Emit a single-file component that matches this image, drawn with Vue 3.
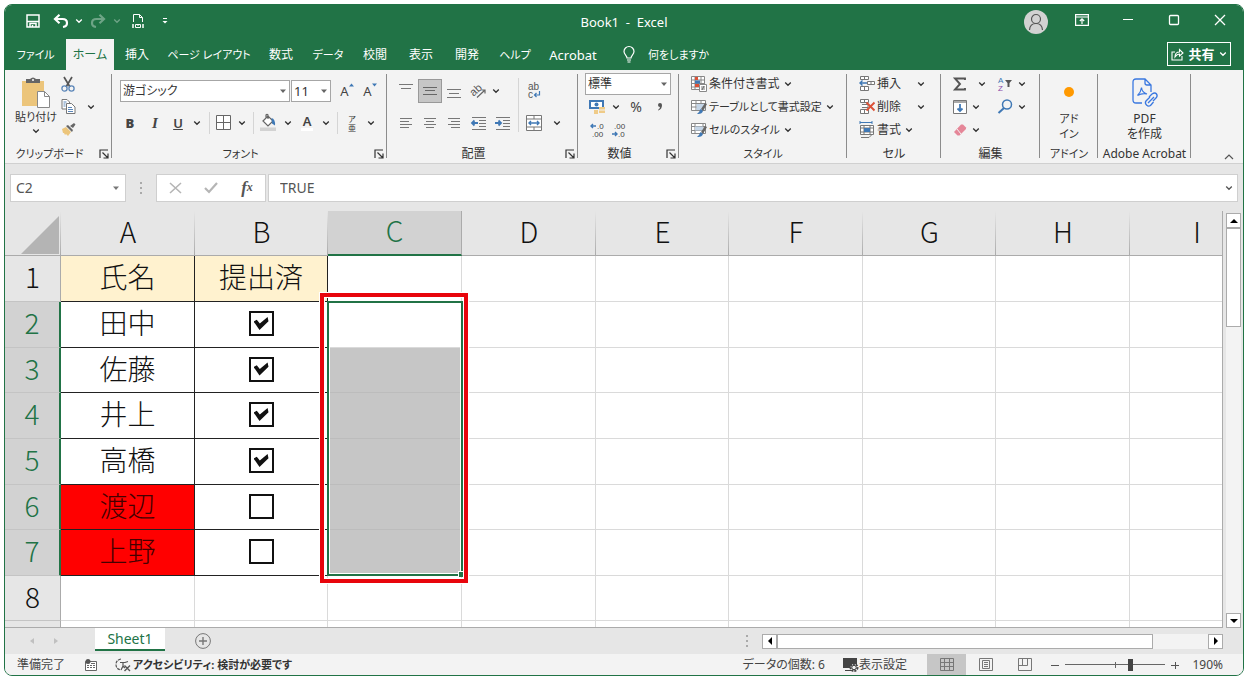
<script setup>
import { ref } from 'vue'

const tabs = ['ファイル', 'ホーム', '挿入', 'ページ レイアウト', '数式', 'データ', '校閲', '表示', '開発', 'ヘルプ', 'Acrobat']
const compact = ['ファイル', 'ページ レイアウト', 'データ', 'ヘルプ']
const activeTab = ref('ホーム')
const letters = ['A', 'B', 'C', 'D', 'E', 'F', 'G', 'H', 'I']
const people = ref([
  { row: 2, name: '田中', done: true },
  { row: 3, name: '佐藤', done: true },
  { row: 4, name: '井上', done: true },
  { row: 5, name: '高橋', done: true },
  { row: 6, name: '渡辺', done: false },
  { row: 7, name: '上野', done: false },
])
const zoom = ref(190)
const formula = ref('TRUE')
</script>

<template>
  <div class="desktop">
    <svg class="defs" aria-hidden="true">
      <symbol id="chev" viewBox="0 0 8 8"><path d="M1.2 2.500 4 5.300 6.800 2.500" fill="none" stroke="currentColor" stroke-width="1.3" /></symbol>
      <symbol id="launch" viewBox="0 0 10 10"><path d="M1 9V1h8M3.5 3.5l5 5M9 4.5V9H4.5" fill="none" stroke="currentColor" stroke-width="1.2" /></symbol>
      <symbol id="tri" viewBox="0 0 8 8"><path d="M1 2.5h6L4 6z" fill="currentColor" /></symbol>
    </svg>
    <main class="window">
      <header class="title-bar">
        <div class="quick">
          <button aria-label="上書き保存"><svg width="14" height="14" viewBox="0 0 14 14" fill="none" stroke="#fff" stroke-width="1.500"><path d="M1 1h12v12H1z" /><path d="M1 7.500h12M4 13v-3.500h6V13" /><path d="M6.500 11v2" /></svg></button>
          <button aria-label="元に戻す"><svg width="16" height="14" viewBox="0 0 16 14" fill="none" stroke="#fff" stroke-width="2.200"><path d="M6.500.8 2 5l4.500 4.200M2 5h7.500q4.500 0 4.500 4 0 3.500-4 4" /></svg></button>
          <button aria-label="元に戻す一覧"><svg class="chev"><use href="#chev" /></svg></button>
          <button aria-label="やり直し" class="dim"><svg width="16" height="14" viewBox="0 0 16 14" fill="none" stroke="#fff" stroke-width="2.200"><path d="M9.500.8 14 5 9.500 9.200M14 5H6.500Q2 5 2 9q0 3.500 4 4" /></svg></button>
          <button aria-label="やり直し一覧" class="dim"><svg class="chev"><use href="#chev" /></svg></button>
          <button aria-label="ページ設定"><svg width="14" height="16" viewBox="0 0 14 16" fill="none" stroke="#fff"><path d="M2.500 9V1.500h6l3 3V9M8.500 1.500v3h3" /><path d="M2 11v4M12 11v4" stroke-width="1.500" /><path d="M4.500 11.500h5v3h-5zM7 11v2" /></svg></button>
          <button aria-label="ツールバーのカスタマイズ"><svg width="8" height="8" viewBox="0 0 8 8"><path d="M2 1.500h4" stroke="#fff" /><path d="M1.500 4h5L4 6.500z" fill="#fff" /></svg></button>
        </div>
        <h1>Book1&nbsp; -&nbsp; Excel</h1>
        <div class="win-buttons">
          <button class="avatar" aria-label="アカウント"><svg width="18" height="18" viewBox="0 0 18 18" fill="none" stroke="#555" stroke-width="1.200"><circle cx="9" cy="6" r="4.500" /><path d="M2.500 17q.5-6.500 6.500-6.500t6.500 6.500" /></svg></button>
          <button aria-label="リボンの表示オプション"><svg width="14" height="12" viewBox="0 0 14 12" fill="none" stroke="#fff" stroke-width="1.200"><path d="M.6.6h12.800v10.800H.6zM.6 3h12.800M7 10V5M4.800 7 7 4.800 9.200 7" /></svg></button>
          <button aria-label="最小化"><svg width="12" height="12" viewBox="0 0 12 12" stroke="#fff" stroke-width="1.200"><path d="M1 5.500h10" /></svg></button>
          <button aria-label="最大化"><svg width="12" height="12" viewBox="0 0 12 12" fill="none" stroke="#fff" stroke-width="1.300"><rect x="1.500" y="1.500" width="9" height="9" rx="1" /></svg></button>
          <button aria-label="閉じる"><svg width="12" height="12" viewBox="0 0 12 12" stroke="#fff" stroke-width="1.300"><path d="m1 1 10 10M11 1 1 11" /></svg></button>
        </div>
      </header>

      <nav class="tab-bar">
        <div class="tabs">
          <button v-for="t in tabs" :key="t" :class="{ active: t === activeTab, kana: compact.includes(t) }" @click="activeTab = t">{{ t }}</button>
        </div>
        <button class="tell-me">
          <svg width="12" height="17" viewBox="0 0 12 17" fill="none" stroke="#fff" stroke-width="1.200"><path d="M4 12c0-2.500-3-3.500-3-6.500a5 5 0 0 1 10 0C11 8.500 8 9.500 8 12zM4 14h4M4.500 16h3" /></svg>
          <span class="kana">何をしますか</span>
        </button>
        <button class="share">
          <svg width="13" height="13" viewBox="0 0 13 13" fill="none" stroke="#fff" stroke-width="1.100"><path d="M4 4H1v8h10V8M4 9q0-5 4.500-5V1.500L12 5 8.500 8V6Q6 6 4 9z" /></svg>
          <b>共有</b><svg class="chev"><use href="#chev" /></svg>
        </button>
      </nav>

      <section class="ribbon" aria-label="リボン">
        <div class="group g-clip">
          <div class="body three">
            <button class="paste">
              <svg width="28" height="32" viewBox="0 0 28 32"><path d="M0 4h22v25H0z" fill="#ecc57b" /><path d="M4 6V2h4q3-3 6 0h4v4z" fill="#666" /><circle cx="11" cy="3" r="1" fill="#fff" /><path d="M15.500 14.500h7l5 5v11h-12z" fill="#fff" stroke="#888" /><path d="M22.500 14.500v5h5" fill="none" stroke="#888" /></svg>
              <span class="kana">貼り付け</span><svg class="chev"><use href="#chev" /></svg>
            </button>
            <button aria-label="切り取り"><svg width="14" height="15" viewBox="0 0 14 15" fill="none"><path d="m3 0 6 10M11 0 5 10" stroke="#555" stroke-width="1.700" /><circle cx="3.500" cy="11.500" r="2.600" stroke="#5b86b8" stroke-width="1.300" /><circle cx="10.500" cy="11.500" r="2.600" stroke="#5b86b8" stroke-width="1.300" /></svg></button>
            <i></i>
            <button aria-label="コピー"><svg width="15" height="15" viewBox="0 0 15 15" fill="#fff" stroke="#777"><path d="M1 .5h5l2.500 2.500v7H1z" /><path d="M5.500 4.500h5L14 8v6.500H5.500z" /><path d="M2.500 3h3M2.500 5h2M2.500 7h2M7 8.500h4M7 10.500h5M7 12.500h5" stroke="#5b86b8" /></svg></button>
            <button aria-label="コピーの種類"><svg class="chev"><use href="#chev" /></svg></button>
            <button aria-label="書式のコピー"><svg width="15" height="13" viewBox="0 0 15 13"><path d="m1 6 4-2 5 5-3 4-2-2-1 1-1-2-1 0z" fill="#ecc57b" /><path d="m5 3 2-1 5 5-1 2zM9 3l4-3 1.500 1.500L12 5z" fill="#666" /></svg></button>
          </div>
          <footer class="kana">クリップボード<button aria-label="クリップボードの詳細"><svg class="launch"><use href="#launch" /></svg></button></footer>
        </div>

        <div class="group g-font">
          <div class="font-top">
            <label class="combo"><select aria-label="フォント"><option>游ゴシック</option></select><svg class="chev"><use href="#tri" /></svg></label>
            <label class="combo size"><select aria-label="フォント サイズ"><option>11</option></select><svg class="chev"><use href="#tri" /></svg></label>
            <button class="grow" aria-label="フォント サイズの拡大">A<svg width="5" height="4" viewBox="0 0 5 4"><path d="M0 3.500h5L2.500.5z" fill="#3f78b5" /></svg></button>
            <button class="grow" aria-label="フォント サイズの縮小">A<svg width="5" height="4" viewBox="0 0 5 4"><path d="M0 .5h5L2.500 3.500z" fill="#3f78b5" /></svg></button>
          </div>
          <div class="font-bottom">
            <button class="letter"><b>B</b></button>
            <button class="letter"><em>I</em></button>
            <button class="letter"><u>U</u></button>
            <button aria-label="下線の種類"><svg class="chev"><use href="#chev" /></svg></button>
            <i class="sep"></i>
            <button aria-label="罫線"><svg width="15" height="15" viewBox="0 0 15 15" fill="#fff" stroke="#666"><path d="M.5.5h14v14H.5zM7.500.5v14M.5 7.500h14" /></svg></button>
            <button aria-label="罫線の種類"><svg class="chev"><use href="#chev" /></svg></button>
            <i class="sep"></i>
            <button aria-label="塗りつぶしの色"><svg width="16" height="17" viewBox="0 0 16 17"><path d="M0 13.500h16V17H0z" fill="#d2d2d2" /><path d="m3 7 5-5 5 5-5 5zM6 4V1q1-1 2 0v4" fill="#fff" stroke="#666" stroke-width="1.200" /><path d="M11.500 4q4 1 3.500 7.500l-3-2z" fill="#3f78b5" /></svg></button>
            <button aria-label="塗りつぶしの色一覧"><svg class="chev"><use href="#chev" /></svg></button>
            <button class="letter color"><span>A</span></button>
            <button aria-label="フォントの色一覧"><svg class="chev"><use href="#chev" /></svg></button>
            <i class="sep"></i>
            <button class="ruby" aria-label="ふりがな"><small>ア</small><small>亜</small></button>
            <button aria-label="ふりがなの設定"><svg class="chev"><use href="#chev" /></svg></button>
          </div>
          <footer class="kana">フォント<button aria-label="フォントの詳細"><svg class="launch"><use href="#launch" /></svg></button></footer>
        </div>

        <div class="group g-align">
          <div class="align-body">
            <button aria-label="上揃え"><svg width="14" height="14" viewBox="0 0 14 14" stroke="#777"><path d="M0 .500h14M2 4.500h10" /></svg></button>
            <button aria-label="上下中央揃え" class="pressed"><svg width="14" height="14" viewBox="0 0 14 14" stroke="#666"><path d="M0 3.500h14M2 6.500h10M0 10.500h14" /></svg></button>
            <button aria-label="下揃え"><svg width="14" height="14" viewBox="0 0 14 14" stroke="#777"><path d="M0 5.500h14M2 9.500h10M0 13.500h14" /></svg></button>
            <button aria-label="方向"><svg width="16" height="16" viewBox="0 0 16 16"><text x="0" y="11" font-size="11" fill="#555" transform="rotate(-42 5 9)">ab</text><path d="M6 14.500 14 7M10.500 7H14v3.500" fill="none" stroke="#666" stroke-width="1.200" /></svg></button>
            <button aria-label="方向の一覧" class="near"><svg class="chev"><use href="#chev" /></svg></button>
            <i class="sep tall"></i>
            <button aria-label="折り返して全体を表示する" class="wrap"><svg width="14" height="20" viewBox="0 0 14 20"><text x="1" y="9" font-size="10" fill="#555">ab</text><text x="1" y="17" font-size="10" fill="#555">c</text><path d="M12.500 10v4H7.500M9.500 12l-2 2 2 2" fill="none" stroke="#3f78b5" stroke-width="1.200" /></svg></button>
            <i></i>
            <button aria-label="左揃え"><svg width="12" height="12" viewBox="0 0 12 12" stroke="#777"><path d="M0 1.500h12M0 4.500h9M0 7.500h12M0 10.500h9" /></svg></button>
            <button aria-label="中央揃え"><svg width="14" height="12" viewBox="0 0 14 12" stroke="#777"><path d="M1 1.500h12M3 4.500h8M1 7.500h12M3 10.500h8" /></svg></button>
            <button aria-label="右揃え"><svg width="12" height="12" viewBox="0 0 12 12" stroke="#777"><path d="M0 1.500h12M3 4.500h9M0 7.500h12M3 10.500h9" /></svg></button>
            <button aria-label="インデントを減らす"><svg width="16" height="14" viewBox="0 0 16 14"><path d="M1 1.500h14M8 4.500h7M8 7.500h7M8 10.500h7M1 13.500h14" stroke="#777" /><path d="M7 7H1M3.500 4.500 1 7l2.500 2.500" fill="none" stroke="#3f78b5" stroke-width="1.800" /></svg></button>
            <button aria-label="インデントを増やす"><svg width="16" height="14" viewBox="0 0 16 14"><path d="M1 1.500h14M8 4.500h7M8 7.500h7M8 10.500h7M1 13.500h14" stroke="#777" /><path d="M0 7h6M3.500 4.500 6 7 3.500 9.500" fill="none" stroke="#3f78b5" stroke-width="1.800" /></svg></button>
            <button aria-label="セルを結合して中央揃え"><svg width="16" height="16" viewBox="0 0 16 16"><path d="M.5.500h15v15H.5zM.5 4h15M.5 12h15M8 .5V4M8 12v3" fill="#fff" stroke="#777" /><path d="M3 8h10M5 6 3 8l2 2M11 6l2 2-2 2" fill="none" stroke="#3f78b5" stroke-width="1.400" /></svg></button>
            <button aria-label="結合の一覧"><svg class="chev"><use href="#chev" /></svg></button>
          </div>
          <footer>配置<button aria-label="配置の詳細"><svg class="launch"><use href="#launch" /></svg></button></footer>
        </div>

        <div class="group g-num">
          <div class="num-body">
            <label class="combo"><select aria-label="表示形式"><option>標準</option></select><svg class="chev"><use href="#tri" /></svg></label>
            <button aria-label="通貨表示形式"><svg width="16" height="16" viewBox="0 0 16 16"><path d="M1 2h13v7H1z" fill="#fff" stroke="#3f78b5" stroke-width="2" /><circle cx="7.500" cy="5.500" r="2" fill="#3f78b5" /><path d="M10 8h6v2.500h-6zM10 11.500h6V14h-6zM5 11h4v4H5z" fill="#efcb88" /></svg></button>
            <button aria-label="通貨の一覧"><svg class="chev"><use href="#chev" /></svg></button>
            <button class="pct">%</button>
            <button aria-label="桁区切り"><svg width="6" height="8" viewBox="0 0 6 8"><path d="M1 2a2 2 0 1 1 4 0q0 4-3.500 5.500L1 7q2-1.500 2-3-2 0-2-2z" fill="#555" /></svg></button>
            <button class="dec" aria-label="小数点以下の表示桁数を増やす"><svg width="14" height="18" viewBox="0 0 14 18"><path d="M6 5H1M3 3 1 5l2 2" fill="none" stroke="#3f78b5" stroke-width="1.400" /><text x="7" y="8" font-size="8">.0</text><text x="2" y="16" font-size="8">.00</text></svg></button>
            <button class="dec" aria-label="小数点以下の表示桁数を減らす"><svg width="14" height="18" viewBox="0 0 14 18"><text x="2" y="8" font-size="8">.00</text><text x="6" y="16" font-size="8">.0</text><path d="M0 13h5M3 11l2 2-2 2" fill="none" stroke="#3f78b5" stroke-width="1.400" /></svg></button>
          </div>
          <footer>数値<button aria-label="数値の詳細"><svg class="launch"><use href="#launch" /></svg></button></footer>
        </div>

        <div class="group g-style">
          <div class="body list">
            <button><svg width="16" height="16" viewBox="0 0 16 16"><path d="M.5.500h13v13H.5zM.5 4h13M.5 7.500h13M.5 11h13M4 .5v13M10 .5v13" fill="#fff" stroke="#888" /><path d="M4 1h3v3H4zM4 8h4v3H4z" fill="#dc5136" /><path d="M4 4.500h5v3H4z" fill="#3f78b5" /><path d="M8.500 8.500h7v7h-7z" fill="#fff" stroke="#888" /><path d="M10 11h4M10 13h4M13 10l-2 4" stroke="#555" stroke-width=".8" /></svg>条件付き書式<svg class="chev"><use href="#chev" /></svg></button>
            <button class="kana"><svg width="16" height="16" viewBox="0 0 16 16"><path d="M.5 1.500h14v10H.5zM.5 4.500h14M.5 8h14M5 1.500v10M10 1.500v10" fill="#fff" stroke="#888" /><path d="M5.500 5h8v6h-8z" fill="#c4d5e7" /><path d="m14 4 2 1-4 7-2-2z" fill="#666" /><path d="m9.500 10 2.500 2q-1 3.500-6 3 2-1 3.500-5z" fill="#3f78b5" /></svg>テーブルとして書式設定<svg class="chev"><use href="#chev" /></svg></button>
            <button class="kana"><svg width="16" height="16" viewBox="0 0 16 16"><path d="M.5 1.500h14v10H.5zM.5 4.500h14M.5 8.500h14M4 1.500v10M12 1.500v10" fill="#fff" stroke="#888" /><path d="M4 4.500h8v4H4z" fill="#c4d5e7" /><path d="m14 4 2 1-4 7-2-2z" fill="#666" /><path d="m9.500 10 2.500 2q-1 3.500-6 3 2-1 3.500-5z" fill="#3f78b5" /></svg>セルのスタイル<svg class="chev"><use href="#chev" /></svg></button>
          </div>
          <footer class="kana">スタイル</footer>
        </div>

        <div class="group g-cell">
          <div class="body list">
            <button><svg width="16" height="16" viewBox="0 0 16 16"><path d="M1.500.5h8v3h-8zM5.500.5v3M1.500 10.500h8v4h-8zM5.500 10.500v4M8.500 5.500h7v3h-7zM12 5.500v3" fill="#fff" stroke="#777" /><path d="M8 7H1M3.500 4.500 1 7l2.500 2.500" fill="none" stroke="#3f78b5" stroke-width="1.400" /></svg><span class="label">挿入</span><svg class="chev"><use href="#chev" /></svg></button>
            <button><svg width="16" height="16" viewBox="0 0 16 16"><path d="M1.500.5h8v3h-8zM5.500.5v3M3 5.500h6v3H3M1.500 10.500h8v4h-8zM5.500 10.500v4" fill="#fff" stroke="#777" /><path d="m7.500 3.500 8 8M15.500 3.500l-8 8" stroke="#dc5136" stroke-width="1.900" /></svg><span class="label">削除</span><svg class="chev"><use href="#chev" /></svg></button>
            <button><svg width="16" height="17" viewBox="0 0 16 17"><path d="M1 1.500h12M1 0v3M13 0v3" stroke="#3f78b5" /><path d="M1.500 4.500h13v9h-13zM1.500 7h13M1.500 11h13M5 4.500v9M11 4.500v9" fill="#fff" stroke="#777" /><path d="M5 7h6v4H5z" fill="#3f78b5" /><path d="M2 16.500h8l3-3" fill="none" stroke="#777" /></svg>書式<svg class="chev"><use href="#chev" /></svg></button>
          </div>
          <footer>セル</footer>
        </div>

        <div class="group g-edit">
          <div class="body edit">
            <button aria-label="合計"><svg width="14" height="14" viewBox="0 0 14 14"><path d="M12 3V1.500H2L7 7l-5 5.500h10V11" fill="none" stroke="#555" stroke-width="1.900" /></svg></button>
            <button aria-label="合計の一覧" class="far"><svg class="chev"><use href="#chev" /></svg></button>
            <button aria-label="並べ替えとフィルター"><svg width="15" height="16" viewBox="0 0 15 16"><text x="0" y="7" font-size="8" fill="#3f78b5">A</text><text x="0" y="15" font-size="8" fill="#8a4aa8">Z</text><path d="M7 4h7l-2.500 3v4H9.500V7z" fill="#555" /></svg></button>
            <button aria-label="並べ替えの一覧"><svg class="chev"><use href="#chev" /></svg></button>
            <button aria-label="フィル"><svg width="14" height="14" viewBox="0 0 14 14"><path d="M.5.500h13v13H.5z" fill="#fff" stroke="#777" /><path d="M1 1h12v2H1z" fill="#aaa" /><path d="M7 4v7M4.500 8.500 7 11l2.500-2.500" fill="none" stroke="#3f78b5" stroke-width="1.800" /></svg></button>
            <button aria-label="フィルの一覧"><svg class="chev"><use href="#chev" /></svg></button>
            <button aria-label="検索と選択"><svg width="16" height="15" viewBox="0 0 16 15" fill="none" stroke="#3f78b5"><circle cx="10" cy="5.500" r="4.500" stroke-width="1.500" /><path d="m7 9-5.500 5" stroke-width="2" /></svg></button>
            <button aria-label="検索の一覧"><svg class="chev"><use href="#chev" /></svg></button>
            <button aria-label="クリア"><svg width="14" height="12" viewBox="0 0 14 12"><path d="m1 8 7-7.500h2l3 3v1.500L6.500 11.500h-2z" fill="#e58698" /><path d="m4 5 4 5" stroke="#f3f3f3" /></svg></button>
            <button aria-label="クリアの一覧"><svg class="chev"><use href="#chev" /></svg></button>
          </div>
          <footer>編集</footer>
        </div>

        <div class="group g-addin">
          <button class="big"><span class="art"><svg width="12" height="12" viewBox="0 0 12 12"><circle cx="6" cy="6" r="5" fill="#f90" /></svg></span><span class="kana">アド<br>イン</span></button>
          <footer class="kana">アドイン</footer>
        </div>

        <div class="group g-pdf">
          <button class="big"><span class="art"><svg width="26" height="29" viewBox="0 0 26 29" fill="none" stroke="#3a78e0" stroke-width="1.300"><path d="M10 25H4q-3 0-3-3V4q0-3 3-3h9l6 6v7M13 1v4q0 2 2 2h4" /><path d="M5.500 17.500q3.500-3.500 4-8 .5 5 5.500 6.500-5-1-9.500 1.500z" stroke-width="1.200" /><path d="m17 19 3-3q3-2 4.500 0t-.5 4l-3 3M18 19l-4 4q-1.500 2 .5 4t4 .5l3-3.500M16 25l6-6" /></svg></span><span>PDF<br>を作成</span></button>
          <footer>Adobe Acrobat</footer>
        </div>
        <button class="collapse" aria-label="リボンを折りたたむ"><svg width="10" height="6" viewBox="0 0 10 6"><path d="m1 5 4-4 4 4" fill="none" stroke="#555" stroke-width="1.200" /></svg></button>
      </section>

      <section class="formula-bar">
        <label class="name-box"><input aria-label="名前ボックス" value="C2"><svg class="chev"><use href="#tri" /></svg></label>
        <span class="dots"></span>
        <div class="fx">
          <button aria-label="キャンセル"><svg width="13" height="12" viewBox="0 0 13 12" stroke="#b5b5b5" stroke-width="1.600"><path d="m1 1 11 10M12 1 1 11" /></svg></button>
          <button aria-label="入力"><svg width="14" height="12" viewBox="0 0 14 12" fill="none" stroke="#b5b5b5" stroke-width="2.200"><path d="m1 6 4 4 8-9" /></svg></button>
          <button class="fn" aria-label="関数の挿入">f<sub>x</sub></button>
        </div>
        <label class="formula"><input v-model="formula" aria-label="数式バー"><svg class="chev"><use href="#chev" /></svg></label>
      </section>

      <section class="sheet">
        <div class="grid">
          <table>
            <colgroup><col class="c-row"><col v-for="l in letters" :key="l" :class="['B', 'E', 'G'].includes(l) ? 'c-slim' : 'c-wide'"></colgroup>
            <thead>
              <tr><th class="corner"><span></span></th><th v-for="l in letters" :key="l" :class="{ sel: l === 'C' }">{{ l }}</th></tr>
            </thead>
            <tbody>
              <tr><th>1</th><td class="head">氏名</td><td class="head">提出済</td><td v-for="n in 7" :key="n"></td></tr>
              <tr v-for="p in people" :key="p.row">
                <th class="sel">{{ p.row }}</th>
                <td class="boxed" :class="{ missing: !p.done }">{{ p.name }}</td>
                <td class="boxed tick"><input v-model="p.done" type="checkbox" :aria-label="p.name"></td>
                <td :class="{ range: p.row > 2 }"></td>
                <td v-for="n in 6" :key="n"></td>
              </tr>
              <tr v-for="r in [8, 9]" :key="r"><th>{{ r === 8 ? r : '' }}</th><td v-for="n in 9" :key="n"></td></tr>
            </tbody>
          </table>
          <div class="selection"></div>
          <div class="callout"></div>
        </div>
        <div class="vscroll">
          <button aria-label="上へ"><svg width="8" height="6" viewBox="0 0 8 6"><path d="M0 5h8L4 1z" /></svg></button>
          <div class="thumb"></div>
          <button class="end" aria-label="下へ"><svg width="8" height="6" viewBox="0 0 8 6"><path d="M0 1h8L4 5z" /></svg></button>
        </div>
      </section>

      <section class="sheet-tabs">
        <div class="arrows"><svg width="5" height="8" viewBox="0 0 5 8"><path d="M5 1v6L1 4z" /></svg><svg width="5" height="8" viewBox="0 0 5 8"><path d="M0 1v6l4-3z" /></svg></div>
        <button class="tab">Sheet1</button>
        <button class="add" aria-label="新しいシート"><svg width="16" height="16" viewBox="0 0 16 16" fill="none" stroke="#777"><circle cx="8" cy="8" r="7.400" /><path d="M8 4v8M4 8h8" stroke-width="1.400" /></svg></button>
        <span class="dots"></span>
        <div class="hscroll">
          <button aria-label="左へ"><svg width="6" height="8" viewBox="0 0 6 8"><path d="M5 0v8L1 4z" /></svg></button>
          <div class="thumb"></div>
          <button class="end" aria-label="右へ"><svg width="6" height="8" viewBox="0 0 6 8"><path d="M1 0v8l4-4z" /></svg></button>
        </div>
      </section>

      <footer class="status">
        <span class="ready">準備完了</span>
        <svg class="macro" width="12" height="12" viewBox="0 0 12 12"><path d="M.5 2.500h11v9H.5z" fill="#fff" stroke="#666" /><path d="M2 6.500h2M5 6.500h2M8 6.500h2M2 8.500h2M5 8.500h2M8 8.500h2M6 4.500h4" stroke="#666" /><circle cx="3" cy="2.500" r="2.500" fill="#555" /></svg>
        <button class="access"><svg width="16" height="14" viewBox="0 0 16 14" fill="none" stroke="#555" stroke-width="1.200"><path d="M6 1Q1 2 1 6.500T6 12" stroke-dasharray="3 1" /><path d="M5 4.500h5l3-1M8 5v3l-2 4M8 8l2 2" /><path d="m9.500 7.500 5.500 5.500M15 7.500 9.500 13" stroke-width="1.400" /></svg><b class="kana">アクセシビリティ: 検討が必要です</b></button>
        <span class="count">データの個数: 6</span>
        <button class="display"><svg width="16" height="14" viewBox="0 0 16 14"><path d="M0 0h14v10H0zM2 12h7v1H2z" fill="#444" /><circle cx="11" cy="9.500" r="3.500" fill="#f3f3f3" stroke="#444" stroke-width="2" stroke-dasharray="2 1" /><circle cx="11" cy="9.500" r="2.200" fill="none" stroke="#444" /></svg>表示設定</button>
        <div class="views">
          <button class="on" aria-label="標準"><svg width="14" height="13" viewBox="0 0 14 13" fill="none" stroke="#777"><path d="M.5.500h13v12H.5zM.5 4.500h13M.5 8.500h13M4.500.5v12M9.500.5v12" /></svg></button>
          <button aria-label="ページ レイアウト"><svg width="14" height="13" viewBox="0 0 14 13" fill="none" stroke="#777"><path d="M.5.500h13v12H.5zM3.500 2.500h7v8h-7zM5 4.500h4M5 6.500h4M5 8.500h4" /></svg></button>
          <button aria-label="改ページ プレビュー"><svg width="14" height="13" viewBox="0 0 14 13" fill="none" stroke="#777"><path d="M.5.500h13v12H.5zM4.500.5v7M9.500.5v7M.5 7.500h9" /></svg></button>
        </div>
        <div class="zoom">
          <button aria-label="縮小"><svg width="8" height="8" viewBox="0 0 8 8"><path d="M0 4.500h8" stroke="#555" /></svg></button>
          <input v-model="zoom" type="range" min="10" max="280" aria-label="ズーム">
          <button aria-label="拡大"><svg width="8" height="8" viewBox="0 0 8 8"><path d="M0 4.500h8M4.500 1v7" stroke="#555" /></svg></button>
          <output>{{ zoom }}%</output>
        </div>
      </footer>
    </main>
  </div>
</template>

<style>
html, body { background: #fff; }
</style>

<style scoped>
* { box-sizing: border-box; }
.desktop {
  height: 100vh; padding: 4px 5px 6px 4px; display: flex;
  font: 12px/16px "Noto Sans", "Noto Sans CJK JP", sans-serif;
  font-feature-settings: "palt"; color: #333;
}
.defs { position: absolute; width: 0; height: 0; }
button, input, select { font: inherit; font-feature-settings: inherit; color: inherit; border: 0; background: none; padding: 0; margin: 0; border-radius: 0; outline: 0; }
button { display: flex; align-items: center; justify-content: center; white-space: nowrap; }
svg { flex: none; display: block; overflow: visible; }
svg text { font-family: "Liberation Sans", sans-serif; }
.kana { font-size: 11px; }
.chev { width: 8px; height: 8px; }
.launch { width: 10px; height: 10px; }
.window { flex: 1; min-width: 0; display: flex; flex-direction: column; overflow: hidden; border: 1px solid #217346; border-radius: 8px; background: #e6e6e6; }

.title-bar { flex: none; height: 34px; background: #217346; color: #fff; display: grid; grid-template-columns: 1fr auto 1fr; align-items: center; }
.title-bar h1 { font-size: 13px; font-weight: 400; margin: 0; }
.quick { display: grid; grid-template-columns: 26px 30px 6px 32px 6px 36px 18px; margin: 0 0 2px 15px; }
.dim { opacity: .35; }
.win-buttons { display: flex; justify-content: flex-end; height: 24px; }
.win-buttons button { width: 46px; height: 20px; }
.win-buttons .avatar { width: 24px; height: 24px; border-radius: 50%; background: #d2d2d2; margin-right: 11px; }

.tab-bar { flex: none; height: 31px; background: #217346; color: #fff; display: flex; align-items: stretch; }
.tabs { display: grid; grid-template-columns: 61px 48px 46px 98px 46px 48px 46px 46px 46px 50px 66px; }
.tabs button:last-child { font-size: 13px; }
.tabs .active { background: #f3f3f3; color: #217346; }
.tell-me { gap: 13px; margin-left: 17px; }
.share { margin: 3px 12px 4px auto; width: 64px; border: 1px solid #fff; gap: 4px; }
.share b { font-size: 13px; }

.ribbon { flex: none; height: 94px; background: #f3f3f3; border-bottom: 1px solid #d0d0d0; display: flex; }
.group { position: relative; flex: none; display: flex; flex-direction: column; padding-top: 3px; }
.group::after { content: ""; position: absolute; right: 0; top: 4px; bottom: 5px; width: 1px; background: #8c8c8c; }
.group footer { margin-top: auto; height: 18px; text-align: center; line-height: 18px; position: relative; }
.group footer button { position: absolute; right: 3px; top: 4px; }
.g-clip { width: 107px; }
.g-font { width: 275px; }
.g-align { width: 191px; }
.g-num { width: 101px; }
.g-style { width: 168px; }
.g-cell { width: 94px; }
.g-edit { width: 99px; }
.g-addin { width: 58px; }
.g-pdf { width: 93px; }
.g-clip footer, .g-font footer, .g-align footer, .g-num footer { padding-right: 18px; }
.body { display: grid; grid-template-rows: 22px 23px 23px; }
.three { grid-template-columns: 50px 16px 30px; padding-left: 5px; }
.paste { grid-row: 1 / 4; flex-direction: column; justify-content: flex-start; padding: 4px 0 0 2px; }
.paste .chev { margin-top: 2px; }

.font-top { height: 36px; padding-left: 8px; display: flex; align-items: center; gap: 1px; }
.combo { position: relative; display: flex; width: 170px; height: 22px; background: #fff; border: 1px solid #a6a6a6; }
.combo select { appearance: none; width: 100%; padding-left: 2px; }
.combo .chev { position: absolute; right: 2px; top: 6px; pointer-events: none; color: #666; }
.combo.size { width: 40px; font-size: 13px; }
.grow { width: 22px; font-size: 13px; color: #444; align-items: flex-start; }
.font-top .grow:nth-of-type(1) { margin-left: 4px; }
.font-bottom { height: 27px; padding-left: 5px; display: grid; grid-template-columns: 26px 24px 22px 16px 8px 20px 18px 4px 26px 14px 24px 14px 8px 22px 16px; align-items: center; }
.font-bottom button { height: 24px; }
.letter { font-size: 13px; color: #444; font-weight: 600; }
.letter em { font-family: "Liberation Serif", serif; font-weight: 700; font-size: 15px; }
.letter span { border-bottom: 3px solid #fff; line-height: 14px; padding: 0 2px; }
.sep { width: 1px; height: 22px; background: #d5d5d5; justify-self: center; }
.ruby { flex-direction: column; }
.ruby small { font-size: 8px; line-height: 9px; }

.align-body { display: grid; grid-template: 36px 27px / 24px 24px 24px 26px 22px 8px 24px 22px; padding-left: 7px; align-items: center; }
.align-body button { height: 24px; }
.pressed { background: #c6c6c6; border: 1px solid #999; }
.align-body .near { justify-content: flex-start; }
.tall { grid-row: 1 / 3; height: 54px; grid-column: 6; }

.num-body { display: grid; grid-template: 22px 23px 23px / 24px 14px 26px 22px; padding-left: 7px; }
.num-body .combo { grid-column: 1 / 5; width: 86px; height: 22px; }
.pct { font-size: 14px; color: #444; }
.dec text { fill: #444; }
.num-body .dec:last-child { grid-column: 2 / 4; justify-content: flex-start; padding-left: 3px; }

.list { padding-left: 12px; }
.list button { justify-content: flex-start; gap: 2px; }
.list .chev { margin-left: 2px; }
.label { width: 36px; text-align: left; }
.edit { grid-template-columns: 24px 20px 26px 8px; padding-left: 7px; }
.edit button:nth-child(even) { justify-content: flex-start; }
.edit button.far { justify-content: center; }
.big { flex-direction: column; }
.art { height: 38px; display: flex; align-items: center; }
.big > span:last-child { line-height: 15px; }
.g-pdf footer { white-space: nowrap; }
.collapse { margin: auto 9px 3px auto; }

.formula-bar { flex: none; height: 42px; padding: 5px 5px 0; display: flex; align-items: center; color: #555; }
.name-box, .fx, .formula { height: 28px; background: #fff; border: 1px solid #cfcfcf; display: flex; align-items: center; }
.name-box { width: 116px; }
.name-box input { flex: 1; min-width: 0; padding-left: 5px; font-size: 14px; }
.name-box .chev { margin-right: 5px; color: #777; }
.dots { width: 2px; height: 12px; margin: 0 14px; background: repeating-linear-gradient(#aaa 0 2px, transparent 2px 5px); }
.fx { width: 110px; margin-right: 2px; }
.fx button { width: 36px; }
.fn { font: italic 700 17px "Liberation Serif", serif; }
.fn sub { font-size: 12px; }
.formula { flex: 1; }
.formula input { flex: 1; min-width: 0; padding-left: 11px; font-size: 14px; }
.formula .chev { margin-right: 4px; }

.sheet { flex: 1; min-height: 0; display: flex; padding-top: 5px; }
.grid { position: relative; flex: 1; min-width: 0; overflow: hidden; border-right: 1px solid #ababab; border-bottom: 1px solid #ababab; }
table { table-layout: fixed; width: 1259px; border-collapse: separate; border-spacing: 0; font: 300 28px/30px "Noto Sans CJK JP", sans-serif; font-feature-settings: normal; color: #111; }
.c-row { width: 56px; }
.c-wide { width: 134px; }
.c-slim { width: 133px; }
th, td { padding: 0 0 5px; text-align: center; vertical-align: middle; overflow: hidden; }
th { font-weight: 300; }
thead th { height: 45px; border-bottom: 1px solid #ababab; background: linear-gradient(#e6e6e6, #ababab) right / 1px 100% no-repeat #e6e6e6; }
thead .sel { background: #d2d2d2; color: #217346; border-bottom: 2px solid #217346; border-right: 1px solid #ababab; }
thead .corner { padding: 0; }
.corner span { display: block; width: 38px; height: 38px; margin: 4px 2px 0 auto; background: #b4b4b4; clip-path: polygon(100% 0, 100% 100%, 0 100%); }
tbody tr { height: 46px; }
tbody tr:nth-child(3n), tbody tr:nth-child(8) { height: 45px; }
tbody th { background: #e6e6e6; border-right: 1px solid #ababab; border-bottom: 1px solid #c4c4c4; }
tbody .sel { background: #d2d2d2; color: #217346; border-right: 2px solid #217346; }
td { background: #fff; border-right: 1px solid #dadada; border-bottom: 1px solid #dadada; }
.head { background: #fff2cf; border-color: #222; }
.boxed { border-color: #222; }
.missing { background: #f00; color: #400; }
.tick { padding-bottom: 2px; }
.range { background: #c6c6c6; border-bottom-color: #bcbcbc; }
td input[type="checkbox"] { appearance: none; width: 25px; height: 25px; border: 2px solid #111; background: #fff; display: grid; place-items: center; margin: 0 auto; }
td input:checked::before { content: ""; width: 15px; height: 14px; background: #111; clip-path: polygon(0 35%, 22% 24%, 42% 50%, 94% 4%, 100% 34%, 40% 96%); }
.selection { position: absolute; left: 322px; top: 90px; width: 136px; height: 275px; border: 2px solid #217346; box-shadow: inset 0 0 0 1px #fff; }
.selection::after { content: ""; position: absolute; right: -3px; bottom: -3px; width: 5px; height: 5px; background: #217346; border: solid #fff; border-width: 1px 0 0 1px; }
.callout { position: absolute; left: 315px; top: 82px; width: 148px; height: 290px; border: 4px solid #e8050c; box-shadow: 0 0 0 1px #fff, inset 0 0 0 1px #fff; }

.vscroll { flex: none; width: 15px; margin: 2px 2px 0 3px; display: flex; flex-direction: column; background: #f3f3f3; }
.vscroll button, .hscroll button { flex: none; width: 15px; height: 15px; background: #fff; border: 1px solid #ababab; }
.vscroll .thumb { height: 99px; background: #fff; border: 1px solid #ababab; }
.vscroll .end { margin-top: auto; }

.sheet-tabs { flex: none; height: 26px; display: flex; align-items: center; }
.arrows { width: 90px; padding-left: 24px; display: flex; gap: 20px; fill: #c0c0c0; }
.tab { align-self: flex-start; width: 70px; height: 23px; background: #fff; color: #217346; border-bottom: 2px solid #217346; font-size: 14px; }
.add { margin-left: 30px; }
.sheet-tabs .dots { margin-left: auto; }
.hscroll { width: 461px; height: 15px; margin-right: 20px; display: flex; background: #f3f3f3; }
.hscroll .thumb { width: 376px; border: 1px solid #ababab; background: #fff; }
.hscroll .end { margin-left: auto; }

.status { flex: none; height: 21px; background: #f3f3f3; display: flex; align-items: center; padding-left: 12px; color: #444; }
.macro { margin-left: 20px; }
.access { margin-left: 18px; gap: 2px; color: #333; }
.count { margin-left: auto; }
.display { margin-left: 18px; }
.views { display: flex; align-self: stretch; margin-left: 20px; }
.views button { width: 39px; }
.views .on { background: #c6c6c6; }
.zoom { display: flex; align-items: center; margin: 0 20px 0 7px; gap: 6px; }
.zoom input { appearance: none; width: 100px; height: 12px; background: linear-gradient(#666, #666) center / 100% 1px no-repeat, linear-gradient(#666, #666) 50% 50% / 1px 6px no-repeat; }
.zoom input::-webkit-slider-thumb { appearance: none; width: 5px; height: 12px; background: #444; }
.zoom output { margin-left: 6px; width: 32px; text-align: right; }
</style>
